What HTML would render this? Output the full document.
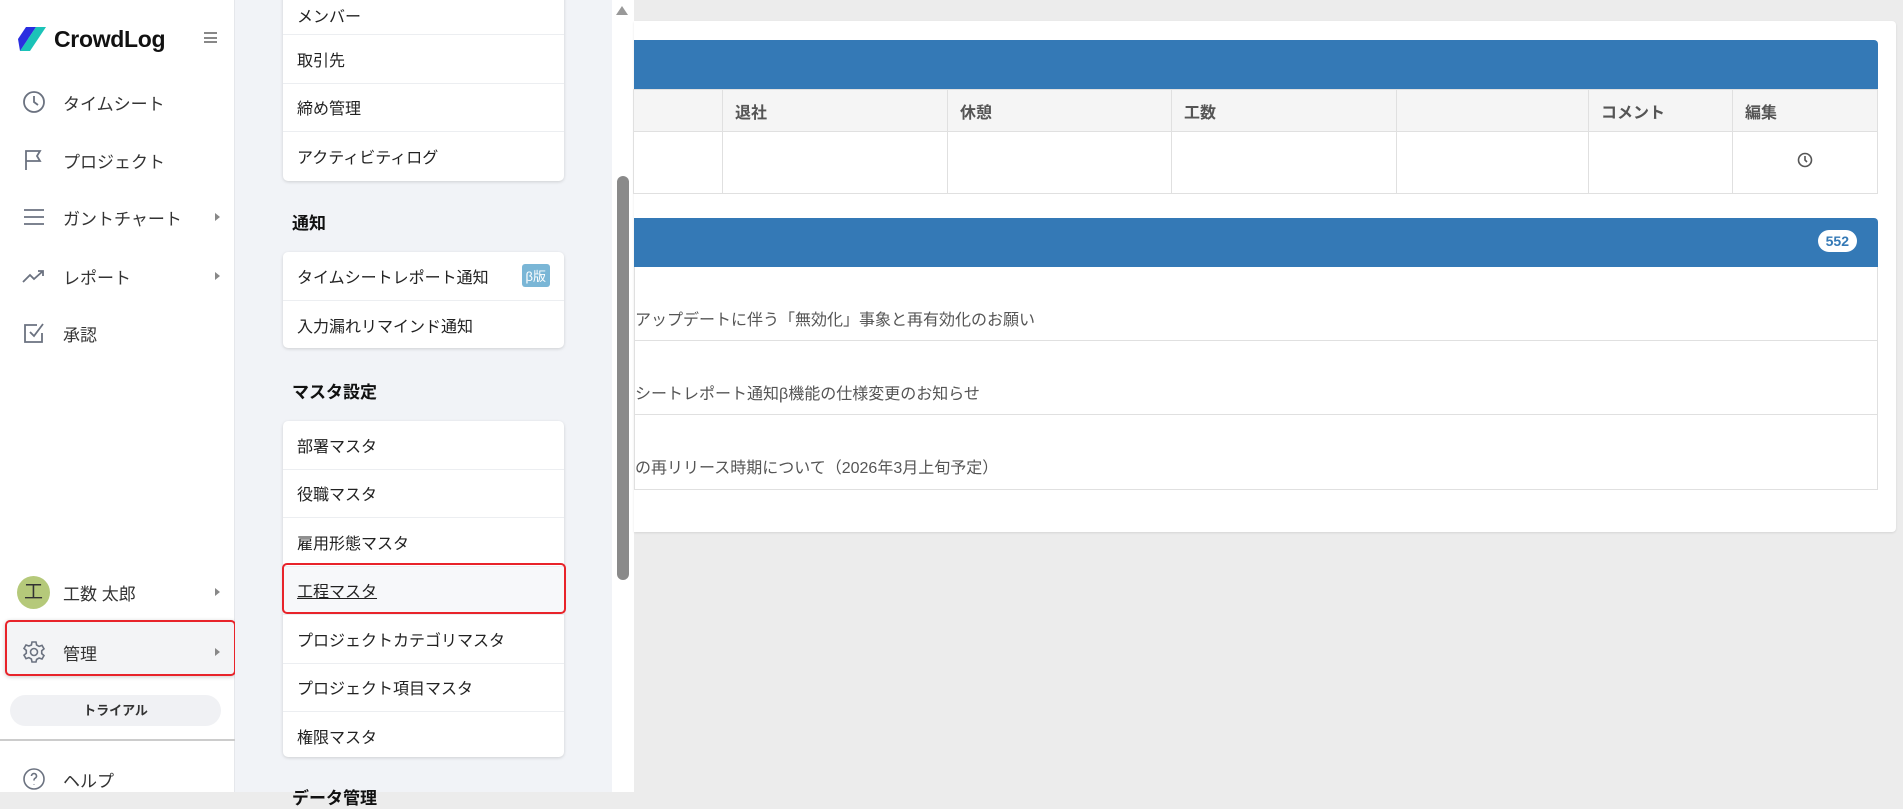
<!DOCTYPE html>
<html><head><meta charset="utf-8"><style>
*{box-sizing:border-box;margin:0;padding:0}
body{width:1903px;height:792px;overflow:hidden;background:#ececec;font-family:"Liberation Sans","Noto Sans CJK JP",sans-serif;color:#333;position:relative}
.abs{position:absolute}
#side{left:0;top:0;width:235px;height:792px;background:#fff;border-right:1px solid #e5e7eb}
.nav{position:absolute;left:0;width:235px;height:40px;display:flex;align-items:center;font-size:17px;color:#333}
.nav svg{position:absolute;left:22px}
.nav span{position:absolute;left:63px}
.caret{position:absolute;left:215px;width:0;height:0;border-left:5px solid #888;border-top:4px solid transparent;border-bottom:4px solid transparent}
#p2{left:235px;top:0;width:377px;height:792px;background:#f1f3f7}
.card{position:absolute;left:48px;width:281px;background:#fff;border-radius:5px;box-shadow:0 1px 3px rgba(0,0,0,.15)}
.row{height:48.5px;border-bottom:1px solid #eceef1;display:flex;align-items:center;padding-left:14px;font-size:16px;color:#222}
.row:last-child{border-bottom:none}
.h{position:absolute;left:57px;font-size:17px;font-weight:bold;color:#111}
#sb{left:612px;top:0;width:22px;height:792px;background:#fff}
#main{left:634px;top:21px;width:1262px;height:511px;background:#fff;border-radius:0 4px 4px 0;box-shadow:0 1px 2px rgba(0,0,0,.1)}
.blue{position:absolute;left:0;width:1244px;background:#3479b6;border-radius:0 4px 0 0}
td{border:1px solid #e0e0e0;font-size:16px;font-weight:bold;color:#555;padding-left:12px}
</style></head><body>
<div id="side" class="abs">
 <svg class="abs" style="left:18px;top:27px" width="28" height="24" viewBox="0 0 28 24"><path d="M8 0h10L10 12H0z" fill="#2a2ee0"/><path d="M18 0h10l-8 12H10z" fill="#1bc3b8"/><path d="M10 12h10l-8 12H2z" fill="#1bc3b8"/><path d="M0 12h10l-8 12" fill="#2a2ee0"/></svg>
 <div class="abs" style="left:54px;top:26px;font-size:23px;font-weight:bold;color:#111;letter-spacing:-.3px">CrowdLog</div>
 <div class="abs" style="left:204px;top:32px;width:13px;height:11px;border-top:2px solid #888;border-bottom:2px solid #888"><div style="margin-top:2.5px;height:2px;background:#888"></div></div>
 <div class="nav" style="top:82px"><svg width="24" height="24" viewBox="0 0 24 24" fill="none" stroke="#6b7280" stroke-width="1.8"><circle cx="12" cy="12" r="10"/><path d="M12 6v6l4 3"/></svg><span>タイムシート</span></div>
 <div class="nav" style="top:140px"><svg width="24" height="24" viewBox="0 0 24 24" fill="none" stroke="#6b7280" stroke-width="1.8"><path d="M4 22V3h14l-3 5 3 5H4"/></svg><span>プロジェクト</span></div>
 <div class="nav" style="top:197px"><svg width="24" height="24" viewBox="0 0 24 24" fill="none" stroke="#6b7280" stroke-width="1.8"><path d="M2 5h20M2 12h20M2 19h20"/></svg><span>ガントチャート</span><i class="caret"></i></div>
 <div class="nav" style="top:256px"><svg width="24" height="24" viewBox="0 0 24 24" fill="none" stroke="#6b7280" stroke-width="1.8"><path d="M1 18l7-7 4 4 9-8M16 7h5v5"/></svg><span>レポート</span><i class="caret"></i></div>
 <div class="nav" style="top:313px"><svg width="24" height="24" viewBox="0 0 24 24" fill="none" stroke="#6b7280" stroke-width="1.8"><path d="M20 12v9H3V4h12M8 11l4 4 9-12"/></svg><span>承認</span></div>
 <div class="nav" style="top:572px"><div style="position:absolute;left:17px;width:33px;height:33px;border-radius:50%;background:#b5c97a;font-size:19px;text-align:center;line-height:33px">工</div><span>工数 太郎</span><i class="caret"></i></div>
 <div class="abs" style="left:5px;top:620px;width:231px;height:56px;border:2px solid #e8232a;border-radius:5px;background:#f3f4f6;box-shadow:0 1px 4px rgba(0,0,0,.2)"></div>
 <div class="nav" style="top:632px"><svg width="24" height="24" viewBox="0 0 24 24" fill="none" stroke="#6b7280" stroke-width="1.6"><circle cx="12" cy="12" r="3.5"/><path d="M10 2h4l.6 3 2.5 1.4 2.9-1 2 3.4-2.3 2v2.8l2.3 2-2 3.4-2.9-1-2.5 1.4L14 22h-4l-.6-3-2.5-1.4-2.9 1-2-3.4 2.3-2v-2.8l-2.3-2 2-3.4 2.9 1L9.4 5z"/></svg><span>管理</span><i class="caret"></i></div>
 <div class="abs" style="left:10px;top:695px;width:211px;height:31px;border-radius:16px;background:#f0f1f4;font-size:13px;font-weight:bold;text-align:center;line-height:31px">トライアル</div>
 <div class="abs" style="left:0;top:739px;width:235px;height:2px;background:#ccc"></div>
 <div class="nav" style="top:759px"><svg width="24" height="24" viewBox="0 0 24 24" fill="none" stroke="#6b7280" stroke-width="1.6"><circle cx="12" cy="12" r="10"/><path d="M9.5 9a2.5 2.5 0 1 1 3.5 2.3c-.7.4-1 1-1 1.7v.5M12 17v.5"/></svg><span>ヘルプ</span></div>
</div>
<div id="p2" class="abs">
 <div class="card" style="top:-14px;height:195px"><div class="row" style="height:49px;padding-top:10px">メンバー</div><div class="row">取引先</div><div class="row">締め管理</div><div class="row">アクティビティログ</div></div>
 <div class="h" style="top:209px">通知</div>
 <div class="card" style="top:252px;height:96px"><div class="row" style="position:relative">タイムシートレポート通知<span style="position:absolute;right:14px;background:#7ab6d6;color:#fff;font-size:13px;padding:2px 4px;border-radius:3px">β版</span></div><div class="row">入力漏れリマインド通知</div></div>
 <div class="h" style="top:378px">マスタ設定</div>
 <div class="card" style="top:421px;height:336px"><div class="row">部署マスタ</div><div class="row">役職マスタ</div><div class="row">雇用形態マスタ</div><div class="row" style="background:#f7f8fa"><u>工程マスタ</u></div><div class="row">プロジェクトカテゴリマスタ</div><div class="row">プロジェクト項目マスタ</div><div class="row">権限マスタ</div></div>
 <div class="abs" style="left:47px;top:563px;width:284px;height:51px;border:2px solid #e8232a;border-radius:5px"></div>
 <div class="h" style="top:784px">データ管理</div>
</div>
<div id="sb" class="abs"><div class="abs" style="left:4px;top:6px;width:0;height:0;border-left:6px solid transparent;border-right:6px solid transparent;border-bottom:9px solid #999"></div><div class="abs" style="left:5px;top:176px;width:12px;height:404px;border-radius:6px;background:#8a8a8a"></div></div>
<div id="main" class="abs">
 <div class="blue" style="top:19px;height:49px"></div>
 <table class="abs" style="left:-1px;top:68px;width:1245px;border-collapse:collapse"><tr style="height:42px;background:#f5f5f5"><td style="width:89px"></td><td style="width:225px">退社</td><td style="width:224px">休憩</td><td style="width:225px">工数</td><td style="width:192px"></td><td style="width:144px">コメント</td><td>編集</td></tr><tr style="height:62px;background:#fff"><td></td><td></td><td></td><td></td><td></td><td></td><td style="text-align:center;padding-left:0"><svg width="16" height="18" viewBox="0 0 16 18" fill="none" stroke="#555" stroke-width="1.6"><circle cx="8" cy="9" r="6.5"/><path d="M8 5v4l2 2"/></svg></td></tr></table>
 <div class="blue" style="top:197px;height:49px"><div class="abs" style="right:21px;top:12px;background:#fff;color:#3479b6;border-radius:12px;font-size:14px;font-weight:bold;padding:3px 8px">552</div></div>
 <div class="abs" style="left:0;top:246px;width:1244px;height:223px;border:1px solid #e0e0e0;border-top:none">
  <div style="height:74px;border-bottom:1px solid #e0e0e0;font-size:16px;color:#555;padding-top:39px">アップデートに伴う「無効化」事象と再有効化のお願い</div>
  <div style="height:74px;border-bottom:1px solid #e0e0e0;font-size:16px;color:#555;padding-top:39px">シートレポート通知β機能の仕様変更のお知らせ</div>
  <div style="height:74px;font-size:16px;color:#555;padding-top:39px">の再リリース時期について（2026年3月上旬予定）</div>
 </div>
</div>
</body></html>
